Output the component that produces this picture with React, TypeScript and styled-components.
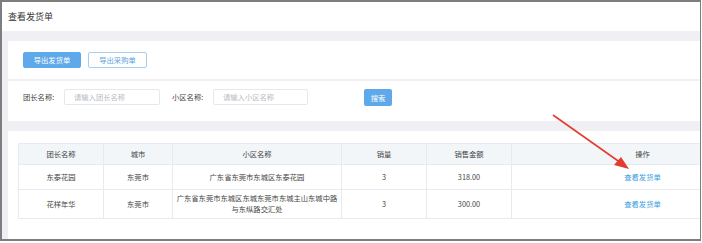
import styled, { createGlobalStyle } from 'styled-components';

const GlobalStyle = createGlobalStyle`
    html, body {
        margin: 0;
        padding: 0;
        background: #ffffff;
        font-family: "Noto Sans CJK SC", "Noto Sans", sans-serif;
    }
`;

const Frame = styled.div`
    position: relative;
    box-sizing: border-box;
    width: 701px;
    height: 241px;
    border: 2px solid #7e7e7e;
    border-right-width: 1.5px;
    overflow: hidden;
    background: #f0f0f4;
`;

const Header = styled.div`
    height: 29px;
    display: flex;
    align-items: center;
    padding-left: 6px;
    background: #ffffff;
    font-size: 9px;
    color: #333333;
`;

const Body = styled.div`
    display: flex;
    flex-direction: column;
    gap: 10px;
    padding: 10px 0 0 6px;
    width: 860px;
`;

const Card = styled.div`
    background: #ffffff;
`;

const ButtonRow = styled.div`
    display: flex;
    gap: 7px;
    padding: 11px 0 11px 15px;
`;

const Button = styled.button<{ $primary?: boolean; $w: number }>`
    box-sizing: border-box;
    width: ${(p) => p.$w}px;
    height: 16px;
    padding: 0;
    border-radius: 2px;
    font-family: inherit;
    font-size: 7.3px;
    border: 1px solid ${(p) => (p.$primary ? '#5ea9ea' : '#a9cdee')};
    background: ${(p) => (p.$primary ? '#5ea9ea' : '#ffffff')};
    color: ${(p) => (p.$primary ? '#ffffff' : '#5d9fd8')};
`;

const Divider = styled.div`
    height: 2px;
    background: #f2f2f5;
`;

const SearchRow = styled.div`
    box-sizing: border-box;
    display: flex;
    align-items: flex-start;
    height: 40px;
    padding: 8px 0 0 15px;
`;

const Label = styled.span`
    width: 41px;
    height: 16px;
    line-height: 16px;
    font-size: 7.3px;
    color: #444444;
`;

const Input = styled.div<{ $w: number; $gap?: number }>`
    box-sizing: border-box;
    width: ${(p) => p.$w}px;
    height: 16px;
    margin-right: ${(p) => p.$gap ?? 0}px;
    border: 1px solid #e6e8ec;
    border-radius: 2px;
    padding-left: 9px;
    line-height: 14px;
    font-size: 7.3px;
    color: #b9bcc2;
`;

const SearchButton = styled.button`
    width: 28px;
    height: 17px;
    padding: 0;
    border: none;
    border-radius: 2px;
    background: #5ea9ea;
    color: #ffffff;
    font-family: inherit;
    font-size: 7.3px;
`;

const TableCard = styled(Card)`
    height: 110px;
    padding: 12px 0 0 10px;
`;

const Table = styled.table`
    border-collapse: collapse;
    table-layout: fixed;
    width: 755px;
    font-size: 7.3px;
    color: #444444;
    text-align: center;

    th, td {
        border: 1px solid #e7ebef;
        padding: 0 1px;
        line-height: 11px;
    }
    th {
        height: 20px;
        background: #f2f6f9;
        font-weight: normal;
    }
`;

const Row = styled.tr<{ $h: number }>`
    td {
        height: ${(p) => p.$h}px;
    }
`;

const Link = styled.span`
    color: #3b9de0;
`;

const Arrow = styled.svg`
    position: absolute;
    left: 0;
    top: 0;
    pointer-events: none;
`;

const cols = [85, 69, 169, 85, 85, 262];

const rows = [
    { name: '东泰花园', city: '东莞市', area: '广东省东莞市东城区东泰花园', qty: '3', amount: '318.00', h: 24 },
    {
        name: '花样年华',
        city: '东莞市',
        area: '广东省东莞市东城区东城东莞市东城主山东城中路与东纵路交汇处',
        qty: '3',
        amount: '300.00',
        h: 28,
    },
];

export default function App() {
    return (
        <>
            <GlobalStyle />
            <Frame>
                <Header>查看发货单</Header>
                <Body>
                    <Card>
                        <ButtonRow>
                            <Button $primary $w={58}>导出发货单</Button>
                            <Button $w={59}>导出采购单</Button>
                        </ButtonRow>
                        <Divider />
                        <SearchRow>
                            <Label>团长名称:</Label>
                            <Input $w={96} $gap={12}>请输入团长名称</Input>
                            <Label>小区名称:</Label>
                            <Input $w={95} $gap={56}>请输入小区名称</Input>
                            <SearchButton>搜索</SearchButton>
                        </SearchRow>
                    </Card>
                    <TableCard>
                        <Table>
                            <colgroup>
                                {cols.map((w, i) => (
                                    <col key={i} style={{ width: w }} />
                                ))}
                            </colgroup>
                            <thead>
                                <tr>
                                    <th>团长名称</th>
                                    <th>城市</th>
                                    <th>小区名称</th>
                                    <th>销量</th>
                                    <th>销售金额</th>
                                    <th>操作</th>
                                </tr>
                            </thead>
                            <tbody>
                                {rows.map((r) => (
                                    <Row key={r.name} $h={r.h}>
                                        <td>{r.name}</td>
                                        <td>{r.city}</td>
                                        <td>{r.area}</td>
                                        <td>{r.qty}</td>
                                        <td>{r.amount}</td>
                                        <td>
                                            <Link>查看发货单</Link>
                                        </td>
                                    </Row>
                                ))}
                            </tbody>
                        </Table>
                    </TableCard>
                </Body>
                <Arrow width="701" height="241">
                    <line x1="551" y1="113" x2="619" y2="161" stroke="#e53b30" strokeWidth="1.6" />
                    <polygon points="627,167 612,163 619,155" fill="#e53b30" />
                </Arrow>
            </Frame>
        </>
    );
}
